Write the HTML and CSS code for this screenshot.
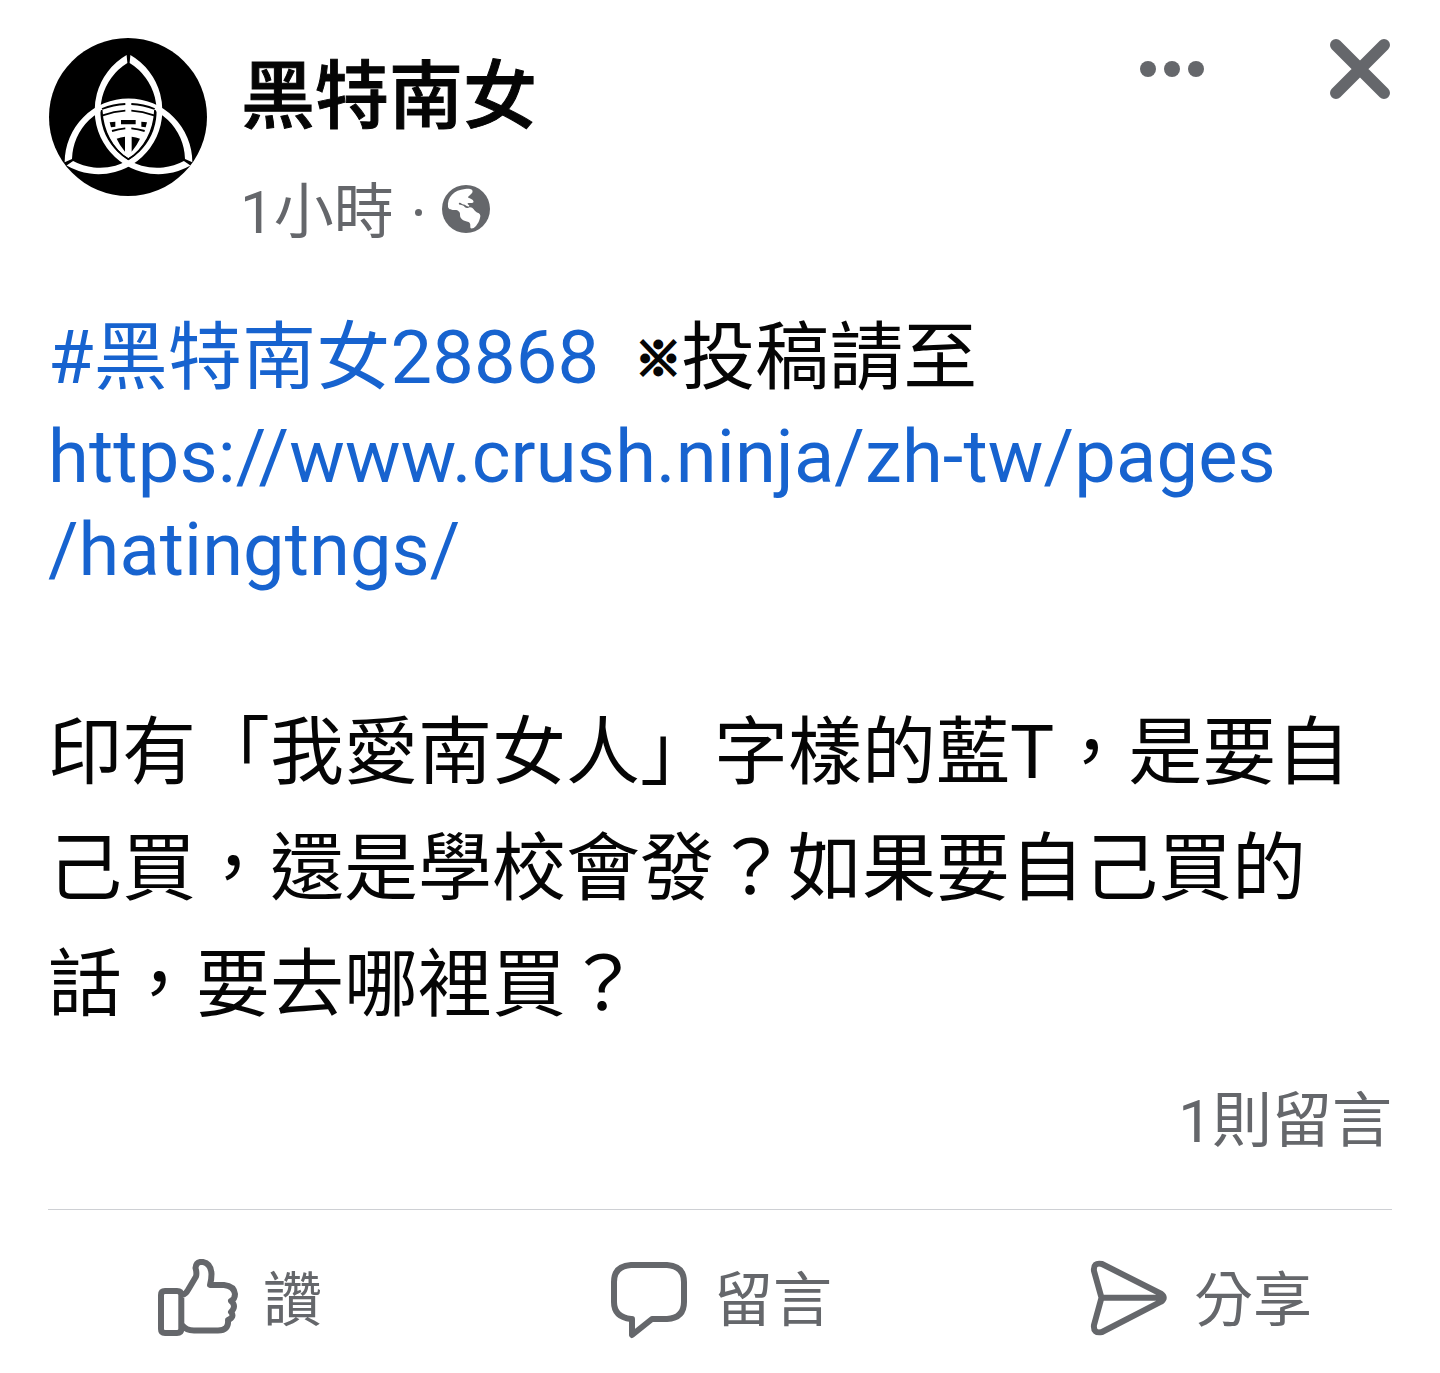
FILE: index.html
```html
<!DOCTYPE html>
<html lang="zh-Hant-TW">
<head>
<meta charset="utf-8">
<title>黑特南女</title>
<link rel="stylesheet" href="styles.css">
</head>
<body>
<article class="post">
  <header class="post-header">
    <svg class="avatar" viewBox="24 21 480 480" aria-hidden="true">
      <circle cx="264" cy="261" r="237"/>
      <g fill="#fff">
        <path id="arm" d="M74 397A191.500 191.500 0 0 1 457 397L435 387A169.560 169.560 0 0 0 96 387Z"/>
        <use href="#arm" transform="rotate(120 265.500 293)"/>
        <use href="#arm" transform="rotate(240 265.500 293)"/>
      </g>
      <g transform="translate(150 180)">
        <path fill="#fff" d="M36 54Q74 38 115 38Q156 38 194 54V66C190 126 162 176 115 205C68 176 40 126 36 66Z"/>
        <path fill="none" stroke="#000" stroke-width="5.500" d="M36 57Q70 44 106 42M124 42Q160 44 194 57M38 76Q72 64 106 62M124 62Q158 64 192 76M66 123Q86 117 106 115M124 115Q144 117 164 123"/>
        <path d="M59 97L76 95V110L63 112ZM171 97L154 95V110L167 112ZM93 90H137V103H93ZM80 146Q92 141 105 140V185Q89 166 80 146ZM150 146Q138 141 125 140V185Q141 166 150 146Z"/>
        <path fill="none" stroke="#000" stroke-width="5" d="M35 60C38 122 66 178 115 208C164 178 192 122 195 60"/>
      </g>
    </svg>
    <div class="byline">
      <h1 class="name">黑特南女</h1>
      <div class="meta"><span>1小時</span><span class="dot"></span>
        <svg class="globe" viewBox="0 0 48 48" aria-hidden="true"><circle cx="24" cy="24" r="24" fill="#65676b"/><path fill="#fff" d="M6 22C5 12 12 5 23 4C28 3.500 31 4 30.500 7C30 9 26 11 26 12.500C29 14 32 15 31.500 17C30.500 19 27 17 25.500 18.500C26 20 28 20 27 21.500C25 22 24 20 22 19.500C20 20 19 17 17 18C16 20 19 19.500 21 20.500C23 22 24 24 27 22.500C31 21.500 32 26 35 27.500C38 28.500 39 30 38 33C37 37 36 38 34 41C32 43.500 29 44 28.500 43C28 40 29 38.500 26.500 37C22 36 18 34 18 30C18.500 27 16 25 13 25C10 25 7 25 6 22Z"/></svg>
      </div>
    </div>
    <div class="tools">
      <svg class="more" viewBox="0 0 64 16" aria-label="更多"><circle cx="8" cy="8" r="8"/><circle cx="32" cy="8" r="8"/><circle cx="56" cy="8" r="8"/></svg>
      <svg class="close" viewBox="0 0 60 60" aria-label="關閉"><path d="M6 6L54 54M54 6L6 54"/></svg>
    </div>
  </header>
  <section class="body">
    <p class="intro"><a>#黑特南女28868</a><span class="mark">※</span><span>投稿請至</span></p>
    <p class="url"><a>https://www.crush.ninja/zh-tw/pages</a></p>
    <p class="url-tail"><a>/hatingtngs/</a></p>
    <p class="message">印有「我愛南女人」字樣的藍T，是要自<br>己買，還是學校會發？如果要自己買的<br>話，要去哪裡買？</p>
  </section>
  <div class="count">1則留言</div>
  <footer class="actions">
    <div class="action like"><svg viewBox="0 0 80 80" aria-hidden="true"><path d="M7 32H19Q23.300 32 23.300 36V70Q23.300 74 19 74H7Q3 74 3 70V36Q3 32 7 32ZM24 36Q28 35 30 31L38 17.500Q39 14 37.500 9Q38 2.800 44 2.800Q53 4 53.500 15Q53.500 21 52 26H66Q76 27 77 35Q77 40 73 42Q79 47 73 53Q77 58 70 61Q71 71.500 60 71.500H36Q28 71.500 24 66"/></svg><span>讚</span></div>
    <div class="action comment"><svg viewBox="0 0 80 80" aria-hidden="true"><path d="M23 76V60H22Q5 58 5 43V23Q5 7 22 6H58Q75 7 75 23V43Q75 59 58 60H43Z"/></svg><span>留言</span></div>
    <div class="action share"><svg viewBox="0 0 80 80" aria-hidden="true"><path d="M13 5L72 34.700Q77.500 38.700 72 42.700L13 73Q4 75 5 66L12.500 38.700L5 12Q4 3 13 5ZM12.500 38.700H74"/></svg><span>分享</span></div>
  </footer>
</article>
</body>
</html>
```
FILE: styles.css
```css
* { box-sizing: border-box; }
body { margin: 0; background: #fff; color: #050505; font-family: Roboto, "Noto Sans CJK TC", sans-serif; }
h1, p { margin: 0; font-weight: 400; }
.post { width: 1440px; height: 1373px; padding: 37px 48px 0; overflow: hidden; }
.post-header { display: flex; height: 271px; }
.avatar { width: 160px; height: 160px; flex: none; }
.byline { margin-left: 32px; padding-top: 10px; flex: 1; }
.name { padding-left: 1px; font-size: 74px; font-weight: 500; line-height: 100px; -webkit-text-stroke: 1px #050505; }
.meta { margin-top: 26px; display: flex; align-items: center; font-size: 60px; line-height: 80px; color: #65676b; }
.dot { width: 7px; height: 7px; border-radius: 50%; background: #65676b; margin: 0 20px 2px 21px; }
.globe { width: 48px; height: 48px; margin-bottom: 8px; }
.tools { display: flex; align-items: center; height: 64px; gap: 126px; padding-right: 2px; }
.more { width: 64px; height: 16px; fill: #65676b; }
.close { width: 60px; height: 60px; fill: none; stroke: #65676b; stroke-width: 12; stroke-linecap: round; }
.body { font-size: 74px; white-space: nowrap; }
.body a { color: #1763cf; letter-spacing: 0.17px; }
.intro { line-height: 100px; }
.mark { display: inline-block; width: 46px; margin-left: 36px; font-family: "Noto Sans CJK TC", sans-serif; font-size: 46px; line-height: 60px; -webkit-text-stroke: 3px #050505; vertical-align: 8px; }
.url { line-height: 98px; }
.url-tail { line-height: 88px; }
.url-tail a { letter-spacing: 0.08px; }
.message { margin-top: 101px; line-height: 116px; }
.count { margin-top: 39px; font-size: 60px; line-height: 80px; text-align: right; color: #65676b; }
.actions { margin-top: 47px; border-top: 1px solid #ced0d4; height: 164px; padding-top: 49px; display: flex; font-size: 59px; line-height: 84px; color: #65676b; }
.action { display: flex; flex: 0 0 480px; justify-content: center; gap: 25px; }
.like { margin-left: -48px; }
.action svg { width: 80px; height: 80px; fill: none; stroke: #65676b; stroke-width: 6; stroke-linejoin: round; }
.comment svg, .share svg { margin-left: 1px; }
```
